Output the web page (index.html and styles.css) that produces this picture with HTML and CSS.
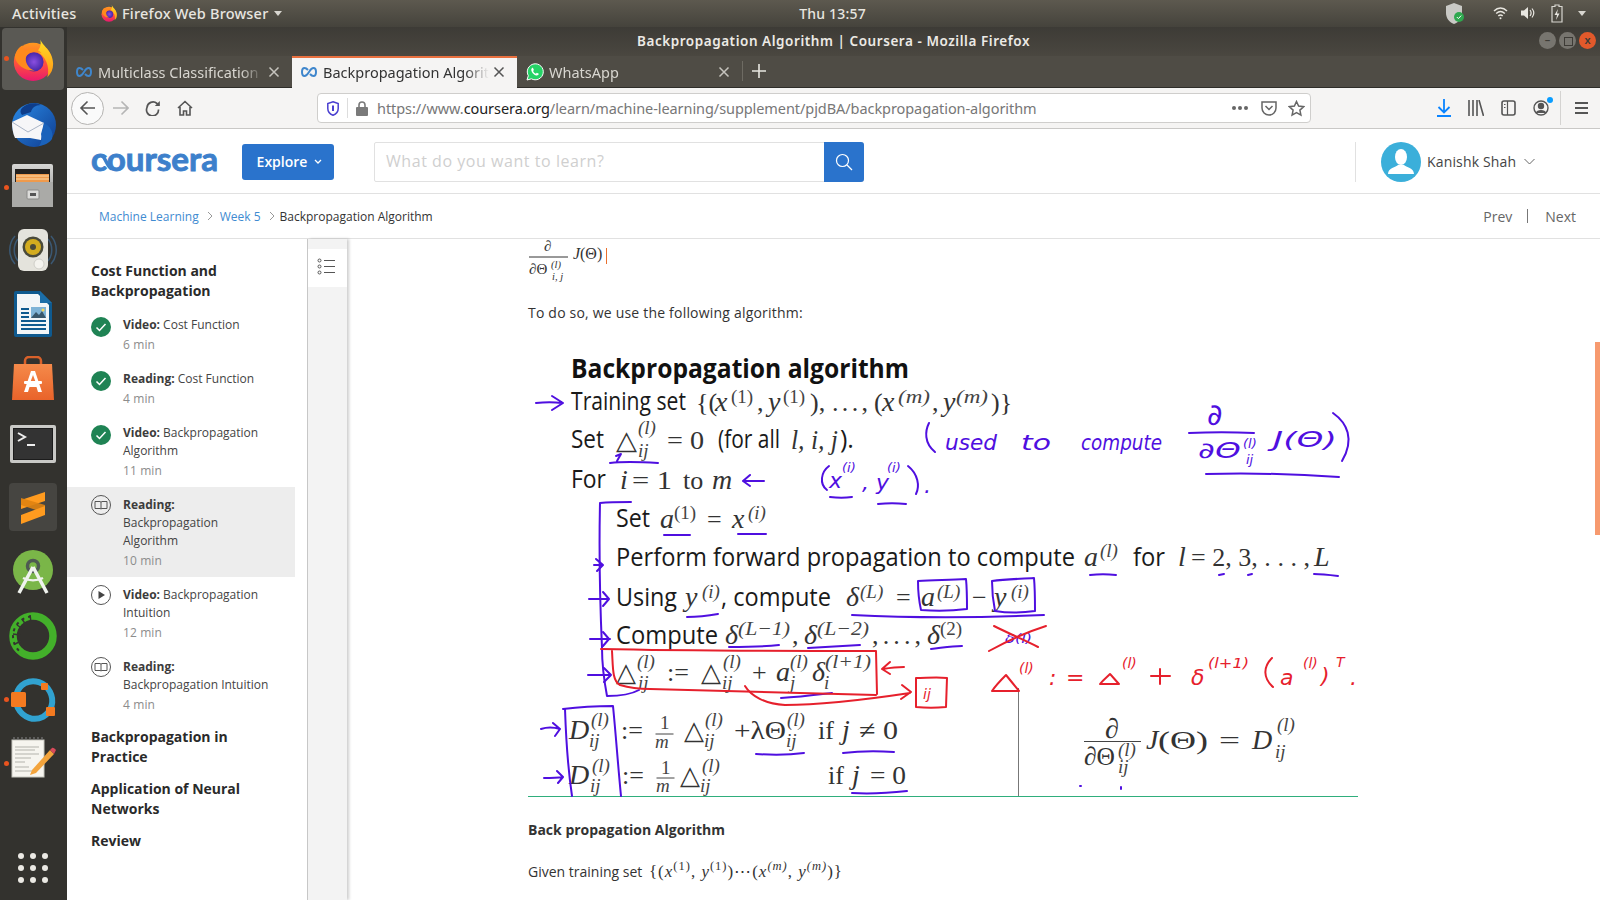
FILE: index.html
```html
<!DOCTYPE html>
<html lang="en">
<head>
  <meta charset="UTF-8" />
  <title>Backpropagation Algorithm | Coursera - Mozilla Firefox</title>
  <link rel="stylesheet" href="styles.css">
</head>
<body>

<svg class="sprite" aria-hidden="true">
  <defs>
    <linearGradient id="ffBody" x1="0" y1="0" x2="0" y2="1"><stop offset="0" stop-color="#ff9a1f"/><stop offset=".55" stop-color="#ff4f3e"/><stop offset="1" stop-color="#e8186f"/></linearGradient>
    <linearGradient id="ffFlame" x1="0" y1="0" x2="0" y2="1"><stop offset="0" stop-color="#ffe226"/><stop offset="1" stop-color="#ff9416"/></linearGradient>
    <radialGradient id="ffGlobe"><stop offset="0" stop-color="#8a4fe0"/><stop offset="1" stop-color="#4527a8"/></radialGradient>
    <linearGradient id="tbBody" x1="0" y1="0" x2="1" y2="1"><stop offset="0" stop-color="#2a8ae6"/><stop offset="1" stop-color="#0f3c8f"/></linearGradient>
    <linearGradient id="cabinet" x1="0" y1="0" x2="0" y2="1"><stop offset="0" stop-color="#d6d6d4"/><stop offset="1" stop-color="#8f8f8c"/></linearGradient>
    <linearGradient id="bag" x1="0" y1="0" x2="0" y2="1"><stop offset="0" stop-color="#f58a4a"/><stop offset="1" stop-color="#e9632a"/></linearGradient>
  </defs>
  <symbol id="i-firefox" viewBox="0 0 48 48">
    <circle cx="24" cy="27" r="20" fill="url(#ffBody)"/>
    <path d="M31 2c2 8 14 13 14 27 0 6-2 10-6 14 3-11-2-22-11-27 4-3 5-9 3-14z" fill="url(#ffFlame)"/>
    <circle cx="25" cy="27" r="10" fill="url(#ffGlobe)"/>
    <path d="M5 22c1-6 4-10 8-12 0 2 1 4 3 5 5-3 13-2 17 3-6-3-13-2-16 3-2 6 2 13 9 15-10 1-19-5-21-14z" fill="#ff8a1c"/>
  </symbol>
  <symbol id="i-tab" viewBox="0 0 16 10">
    <path d="M7 3C5.800 1.600 4.600 1 3.500 1 2 1 1 2.600 1 5s1 4 2.500 4c2.500 0 3.500-2.500 4.500-4s2-4 4.500-4C14 1 15 2.600 15 5s-1 4-2.500 4C11.400 9 10.200 8.400 9 7" fill="none" stroke="#3f86cc" stroke-width="2"/>
  </symbol>
  <symbol id="i-x" viewBox="0 0 12 12">
    <path d="M1.500 1.500l9 9m0-9l-9 9" fill="none" stroke="currentColor" stroke-width="1.500"/>
  </symbol>
  <symbol id="i-done" viewBox="0 0 20 20">
    <circle cx="10" cy="10" r="10" fill="#1f8354"/>
    <path d="M5.500 10.500l3 3 6-6.500" fill="none" stroke="#fff" stroke-width="1.500"/>
  </symbol>
  <symbol id="i-read" viewBox="0 0 20 20">
    <circle cx="10" cy="10" r="9.500" fill="none" stroke="#555"/>
    <path d="M4 6.500h5c.6 0 1 .4 1 1 0-.6.400-1 1-1h5v7h-5c-.6 0-1 .2-1 .6 0-.4-.4-.6-1-.6H4zM10 7.500v6.600" fill="none" stroke="#555"/>
  </symbol>
</svg>

<header class="topbar">
  <div class="topbar-left">
    <span class="activities">Activities</span>
    <svg class="ff-small"><use href="#i-firefox"/></svg>
    <span>Firefox Web Browser</span>
    <span class="caret"></span>
  </div>
  <div class="clock">Thu 13:57</div>
  <div class="topbar-right">
    <svg class="tray-shield" width="20" height="23" viewBox="0 0 20 23">
      <path d="M9 1l8 3v7c0 5-3 9-8 11-5-2-8-6-8-11V4z" fill="#c9c9c5"/>
      <circle cx="14" cy="15" r="5" fill="#2fa84f"/>
      <path d="M11.800 15l1.600 1.600 2.800-3" fill="none" stroke="#fff" stroke-width="1"/>
    </svg>
    <svg class="tray-wifi" width="15" height="14" viewBox="0 0 15 14" fill="none" stroke="#e8e6e0" stroke-width="1.500">
      <path d="M1 5c4-4 9-4 13 0M3.200 7.500c2.800-2.600 5.800-2.600 8.600 0M5.300 9.800c1.500-1.200 2.900-1.200 4.400 0"/>
      <circle cx="7.500" cy="12.300" r="1" fill="#e8e6e0" stroke="none"/>
    </svg>
    <svg class="tray-vol" width="15" height="14" viewBox="0 0 15 14" fill="#e8e6e0">
      <path d="M1 4.500h3L8 1v12L4 9.500H1z"/>
      <path d="M10 4c1.500 2 1.500 4 0 6M12 2.500c2.400 3 2.400 6 0 9" fill="none" stroke="#e8e6e0" stroke-width="1.200"/>
    </svg>
    <svg class="tray-bat" width="12" height="19" viewBox="0 0 12 19">
      <path d="M4 1h4v1.500h3v15.500H1V2.500h3z" fill="none" stroke="#d8d6d0" stroke-width="1.200"/>
      <path d="M7 5L3.500 11H6l-1 5 3.500-6.500H6z" fill="#e8e6e0"/>
    </svg>
    <span class="caret"></span>
  </div>
</header>

<div class="desktop">
  <nav class="dock">
    <div class="dock-item active">
      <span class="run-dot"></span>
      <svg width="46" height="46"><use href="#i-firefox"/></svg>
    </div>
    <div class="dock-item">
      <svg width="48" height="48" viewBox="0 0 48 48">
        <circle cx="25" cy="25" r="22" fill="url(#tbBody)"/>
        <path d="M13 8c5-5 13-6 19-3-6 0-9 3-10 7l-9 3c-2-2-2-5 0-7z" fill="#0e3d8a"/>
        <path d="M3 22l15-7 17 8-3 17-11-2-15 0C4 34 3 28 3 22z" fill="#f6f6f8"/>
        <path d="M3 22l16 10 16-9" fill="none" stroke="#a9b4c6" stroke-width="1"/>
        <path d="M35 23c6 3 10 9 8 16-3 4-7 6-13 7 3-4 3-8 2-12z" fill="#1a62bb"/>
      </svg>
    </div>
    <div class="dock-item">
      <span class="run-dot"></span>
      <svg class="up-2" width="42" height="44" viewBox="0 0 42 44">
        <rect x="0" y="0" width="41" height="43" rx="2" fill="url(#cabinet)"/>
        <rect x="3" y="5" width="35" height="13" fill="#23211f"/>
        <rect x="4" y="10" width="33" height="8" fill="#ef9a4c"/>
        <path d="M4 12h33M4 15h33" stroke="#fbd9a6" stroke-width="1"/>
        <path d="M0 18h41v25H0z" fill="#aaaaa7"/>
        <rect x="15" y="26" width="12" height="9" rx="1" fill="#dcdcda" stroke="#8a8a88"/>
        <rect x="18" y="29" width="6" height="3" fill="#555"/>
      </svg>
    </div>
    <div class="dock-item">
      <svg class="up-2" width="48" height="44" viewBox="0 0 48 44">
        <g fill="none" stroke="#3b5873" stroke-width="1.500">
          <path d="M6 8C-1 16-1 28 6 36M42 8c7 8 7 20 0 28"/>
          <path d="M9 11C4 17 4 27 9 33M39 11c5 6 5 16 0 22"/>
        </g>
        <rect x="9" y="1" width="30" height="42" rx="6" fill="#e4e3dc"/>
        <circle cx="24" cy="19" r="10.500" fill="#4a4a3a"/>
        <circle cx="24" cy="19" r="8" fill="#d3ac1f"/>
        <circle cx="24" cy="19" r="3" fill="#4a4a3a"/>
        <circle cx="30" cy="36" r="5" fill="#f4f3ee" stroke="#cfcec8"/>
      </svg>
    </div>
    <div class="dock-item">
      <svg class="up-2" width="40" height="48" viewBox="0 0 40 48">
        <path d="M1 3a2 2 0 012-2h24l12 12v32a2 2 0 01-2 2H3a2 2 0 01-2-2z" fill="#0f5a8f"/>
        <path d="M4 4h21l11 11v29H4z" fill="#f3f6f8"/>
        <path d="M27 1l12 12H27z" fill="#1c6ea8"/>
        <path d="M8 19h8M8 23h8M8 27h8M8 31h25M8 35h25M8 39h25" stroke="#0f5a8f" stroke-width="2"/>
        <rect x="18" y="17" width="15" height="11" fill="#7fb3d6"/>
        <path d="M18 28l5-6 3 3 3-4 4 7z" fill="#39576b"/>
        <circle cx="30" cy="20" r="1.500" fill="#f4d65a"/>
      </svg>
    </div>
    <div class="dock-item">
      <svg class="up-2" width="42" height="44" viewBox="0 0 42 44">
        <path d="M13 10V5a4 4 0 014-4h8a4 4 0 014 4v5" fill="none" stroke="#d9612a" stroke-width="2.500"/>
        <path d="M2 8h38l2 36H0z" fill="url(#bag)"/>
        <path d="M12 36l7-21h4l7 21h-4l-1.500-5h-7L16 36zM18 27h6l-3-8z" fill="#fff"/>
        <rect x="12" y="25" width="18" height="3" rx="1" fill="#fff"/>
      </svg>
    </div>
    <div class="dock-item">
      <svg width="46" height="38" viewBox="0 0 46 38">
        <rect width="46" height="38" rx="2" fill="#c9c9c6"/>
        <rect x="3" y="3" width="40" height="32" fill="#1c1c1c"/>
        <rect x="4" y="4" width="38" height="30" fill="#333"/>
        <path d="M8 8l7 4-7 4" fill="none" stroke="#eee" stroke-width="2"/>
        <path d="M17 20h8" stroke="#eee" stroke-width="2"/>
      </svg>
    </div>
    <div class="dock-item tile">
      <svg width="26" height="32" viewBox="0 0 26 32">
        <path d="M25 0v9L1 17V8z" fill="#ff9b1f"/>
        <path d="M1 13l24 8v-8L1 6z" fill="#e08311" opacity=".9"/>
        <path d="M25 14v9L1 32v-9z" fill="#ff9b1f"/>
      </svg>
    </div>
    <div class="dock-item">
      <svg width="42" height="46" viewBox="0 0 42 46">
        <circle cx="21" cy="21" r="20" fill="#7ab648"/>
        <circle cx="21" cy="17" r="5.500" fill="none" stroke="#4e5a52" stroke-width="3.500"/>
        <path d="M21 18L7 44M21 18l14 26" stroke="#f0f3ee" stroke-width="3.500"/>
        <path d="M11 29c6 3 14 3 20 0" fill="none" stroke="#f0f3ee" stroke-width="2.500"/>
      </svg>
    </div>
    <div class="dock-item">
      <svg width="48" height="48" viewBox="0 0 48 48">
        <circle cx="24" cy="24" r="20" fill="none" stroke="#43b02a" stroke-width="7.500"/>
        <path d="M22 4.500A20 20 0 004 24c0 8 4 14 9 17" fill="none" stroke="#343330" stroke-width="2" stroke-dasharray="3 4"/>
        <path d="M8 13l6 4M4 22l7 1M6 32l6-3M13 7l4 6M21 3l1 7" stroke="#343330" stroke-width="1.500"/>
      </svg>
    </div>
    <div class="dock-item">
      <span class="run-dot"></span>
      <svg width="48" height="48" viewBox="0 0 48 48">
        <ellipse cx="25" cy="24" rx="18" ry="19" transform="rotate(-28 25 24)" fill="none" stroke="#31a2d0" stroke-width="6"/>
        <rect x="2" y="16" width="15" height="15" rx="1.500" fill="#f47a20"/>
        <rect x="32" y="7" width="7" height="7" rx="1" fill="#f47a20"/>
        <rect x="37" y="31" width="9" height="9" rx="1" fill="#f47a20"/>
      </svg>
    </div>
    <div class="dock-item note">
      <span class="run-dot"></span>
      <svg width="46" height="42" viewBox="0 0 46 42">
        <rect x="2" y="3" width="32" height="37" fill="#f6f5ef" stroke="#c8c8c0"/>
        <path d="M4 3v-3M8 3v-3M12 3v-3M16 3v-3M20 3v-3M24 3v-3M28 3v-3M32 3v-3" stroke="#777" stroke-width="1.200"/>
        <path d="M5 10h24M5 13h20M5 17h24M5 21h16M5 25h10M5 30h14M5 34h20" stroke="#b3b3ac" stroke-width="1"/>
        <path d="M22 33l18-20 4 4-18 19-6 2z" fill="#f3a43c"/>
        <path d="M40 13l2-2c1-1 3 1 4 2l-2 4z" fill="#d84a5a"/>
      </svg>
    </div>
    <div class="dock-apps">
      <span></span><span></span><span></span>
      <span></span><span></span><span></span>
      <span></span><span></span><span></span>
    </div>
  </nav>

  <div class="window">
    <div class="titlebar">
      <div class="title">Backpropagation Algorithm | Coursera - Mozilla Firefox</div>
      <div class="win-btns">
        <span class="wbtn">&#8211;</span>
        <span class="wbtn square"></span>
        <span class="wbtn close">x</span>
      </div>
    </div>

    <div class="tabs">
      <div class="tab">
        <svg class="favicon"><use href="#i-tab"/></svg>
        <span class="tab-title">Multiclass Classification</span>
        <svg class="tab-x"><use href="#i-x"/></svg>
      </div>
      <div class="tab current">
        <svg class="favicon"><use href="#i-tab"/></svg>
        <span class="tab-title">Backpropagation Algorithm</span>
        <svg class="tab-x"><use href="#i-x"/></svg>
      </div>
      <div class="tab">
        <svg class="wa" width="18" height="18" viewBox="0 0 18 18">
          <path d="M1 17l1.300-4.300A8 8 0 115.400 15.800z" fill="#25d366" stroke="#fff" stroke-width="1"/>
          <path d="M6.300 4.800c-1 .8-1.400 2-.6 3.600 1 2 2.500 3.400 4.500 4 1.200.3 2.400-.4 2.600-1.600l-2-1-.9 1c-1.300-.5-2.200-1.400-2.800-2.700l.8-1-1-2.300z" fill="#fff"/>
        </svg>
        <span class="tab-title">WhatsApp</span>
        <svg class="tab-x"><use href="#i-x"/></svg>
      </div>
      <div class="new-tab">
        <svg width="14" height="14" viewBox="0 0 14 14" stroke="#e8e6e0" stroke-width="1.600"><path d="M7 0v14M0 7h14"/></svg>
      </div>
    </div>

    <div class="toolbar">
      <div class="nav-btns">
        <span class="back">
          <svg width="18" height="18" viewBox="0 0 18 18" fill="none" stroke="#555" stroke-width="1.600"><path d="M16 9H2M8.500 2.500L2 9l6.500 6.500"/></svg>
        </span>
        <svg class="fwd" width="16" height="16" viewBox="0 0 16 16" fill="none" stroke="#b5b5b5" stroke-width="1.600"><path d="M0 8h15M8.500 1.500L15 8l-6.500 6.500"/></svg>
        <svg class="reload" width="16" height="16" viewBox="0 0 16 16" fill="none" stroke="#555" stroke-width="1.700"><path d="M13.500 9.500A6 6 0 112 7.500 6 6 0 0112 3.500l2 2"/><path d="M14.800 1v5h-5" fill="#555" stroke="none"/></svg>
        <svg class="home" width="16" height="16" viewBox="0 0 16 16" fill="none" stroke="#555" stroke-width="1.600"><path d="M1 8l7-6.500L15 8M3 7v8h3.500v-4h3v4H13V7"/></svg>
      </div>
      <div class="urlbar">
        <svg width="12" height="15" viewBox="0 0 12 15"><path d="M6 .8L11.200 2.500v5c0 3-2 5.500-5.200 6.800C2.800 13 .8 10.500.8 7.500v-5z" fill="none" stroke="#4a3fd0" stroke-width="1.500"/><path d="M5 4.500h2v5.500H5z" fill="#4a3fd0"/></svg>
        <span class="url-sep"></span>
        <svg width="12" height="15" viewBox="0 0 12 15"><rect y="6" width="12" height="9" rx="1" fill="#7a7a7a"/><path d="M3 7V4a3 3 0 016 0v3" fill="none" stroke="#7a7a7a" stroke-width="1.600"/></svg>
        <span class="url"><span class="dim">https://www.</span>coursera.org<span class="dim">/learn/machine-learning/supplement/pjdBA/backpropagation-algorithm</span></span>
        <span class="url-dots"><i></i><i></i><i></i></span>
        <svg width="16" height="16" viewBox="0 0 16 16" fill="none" stroke="#666" stroke-width="1.500"><path d="M1 2h14v6a7 7 0 01-14 0z"/><path d="M4.500 6L8 9.500 11.500 6"/></svg>
        <svg width="17" height="17" viewBox="0 0 17 17" fill="none" stroke="#666" stroke-width="1.500"><path d="M8.500 1.500l2.100 4.600 5 .6-3.700 3.400 1 5-4.400-2.500-4.400 2.500 1-5L1.400 6.700l5-.6z"/></svg>
      </div>
      <div class="tool-icons">
        <svg width="14" height="18" viewBox="0 0 14 18" fill="none" stroke="#0a84ff" stroke-width="1.800"><path d="M7 0v13M1.500 8L7 13.500 12.500 8M0 17h14"/></svg>
        <svg width="16" height="16" viewBox="0 0 16 16" fill="none" stroke="#555" stroke-width="1.600"><path d="M1 0v16M5 0v16M9 0v16M11 0l4.500 16"/></svg>
        <svg width="15" height="16" viewBox="0 0 15 16" fill="none" stroke="#555" stroke-width="1.600"><rect x="1" y="1" width="13" height="14" rx="2"/><path d="M6.500 1v14M3 4.500h1.500M3 7.500h1.500" stroke-width="1.200"/></svg>
        <span class="account">
          <svg width="16" height="16" viewBox="0 0 16 16" fill="none" stroke="#555" stroke-width="1.400"><circle cx="8" cy="8" r="7"/><circle cx="8" cy="6" r="2.500" fill="#555"/><path d="M3.500 13c1-3 8-3 9 0" fill="#555"/></svg>
          <i></i>
        </span>
        <span class="tool-sep"></span>
        <svg width="13" height="12" viewBox="0 0 13 12" stroke="#555" stroke-width="1.800"><path d="M0 1h13M0 6h13M0 11h13"/></svg>
      </div>
    </div>

    <div class="site-head">
      <svg class="logo" width="131" height="44" viewBox="0 0 131 44">
        <text x="1" y="31" textLength="127" lengthAdjust="spacingAndGlyphs">coursera</text>
        <path d="M12 16c4 2 5 11 10 13" fill="none" stroke="#3d80cb" stroke-width="3.500"/>
      </svg>
      <div class="explore">Explore <svg width="8" height="6" viewBox="0 0 8 6" fill="none" stroke="#fff" stroke-width="1.300"><path d="M1 1l3 3 3-3"/></svg></div>
      <div class="search">
        <span class="search-hint">What do you want to learn?</span>
        <span class="search-btn"><svg width="18" height="18" viewBox="0 0 18 18" fill="none" stroke="#fff" stroke-width="1.200"><circle cx="7.500" cy="7.500" r="6"/><path d="M12 12l5 5"/></svg></span>
      </div>
      <div class="user">
        <svg class="avatar" width="40" height="40" viewBox="0 0 40 40">
          <circle cx="20" cy="20" r="20" fill="#3bafda"/>
          <ellipse cx="20" cy="15" rx="6" ry="8" fill="#fff"/>
          <path d="M7 32c0-6 8-7 10-9h6c2 2 10 3 10 9z" fill="#fff"/>
        </svg>
        <span class="user-name">Kanishk Shah</span>
        <svg width="11" height="7" viewBox="0 0 11 7" fill="none" stroke="#666"><path d="M.5 1l5 5 5-5"/></svg>
      </div>
    </div>

    <div class="crumbs">
      <a class="crumb">Machine Learning</a>
      <svg width="6" height="10" viewBox="0 0 6 10" fill="none" stroke="#999"><path d="M1 1l4 4-4 4"/></svg>
      <a class="crumb">Week 5</a>
      <svg width="6" height="10" viewBox="0 0 6 10" fill="none" stroke="#999"><path d="M1 1l4 4-4 4"/></svg>
      <span class="crumb-now">Backpropagation Algorithm</span>
      <div class="pager"><span>Prev</span><i></i><span>Next</span></div>
    </div>

    <div class="learn">
      <aside class="lessons">
        <h3 class="group first">Cost Function and Backpropagation</h3>
        <div class="item">
          <svg class="status ok"><use href="#i-done"/></svg>
          <div><div class="item-title"><b>Video:</b> Cost Function</div><div class="item-dur">6 min</div></div>
        </div>
        <div class="item">
          <svg class="status ok"><use href="#i-done"/></svg>
          <div><div class="item-title"><b>Reading:</b> Cost Function</div><div class="item-dur">4 min</div></div>
        </div>
        <div class="item">
          <svg class="status ok"><use href="#i-done"/></svg>
          <div><div class="item-title"><b>Video:</b> Backpropagation<br>Algorithm</div><div class="item-dur">11 min</div></div>
        </div>
        <div class="item selected">
          <svg class="status"><use href="#i-read"/></svg>
          <div><div class="item-title"><b>Reading:</b><br>Backpropagation<br>Algorithm</div><div class="item-dur">10 min</div></div>
        </div>
        <div class="item">
          <svg class="status" viewBox="0 0 20 20"><circle cx="10" cy="10" r="9.500" fill="none" stroke="#555"/><path d="M7.500 6l6.500 4-6.500 4z" fill="#444"/></svg>
          <div><div class="item-title"><b>Video:</b> Backpropagation<br>Intuition</div><div class="item-dur">12 min</div></div>
        </div>
        <div class="item">
          <svg class="status"><use href="#i-read"/></svg>
          <div><div class="item-title"><b>Reading:</b><br>Backpropagation Intuition</div><div class="item-dur">4 min</div></div>
        </div>
        <h3 class="group">Backpropagation in Practice</h3>
        <h3 class="group">Application of Neural Networks</h3>
        <h3 class="group">Review</h3>
      </aside>

      <div class="toggle-col">
        <div class="toggle">
          <svg width="18" height="17" viewBox="0 0 18 17" fill="none" stroke="#555">
            <circle cx="2.500" cy="2.500" r="1.500"/><circle cx="2.500" cy="8.500" r="1.500"/><circle cx="2.500" cy="14.500" r="1.500"/>
            <path d="M7 2.500h11M7 8.500h11M7 14.500h11"/>
          </svg>
        </div>
      </div>

      <main class="article">
        <svg class="formula" width="90" height="46" viewBox="528 239 90 46">
          <text class="f" x="544" y="251">∂</text>
          <path d="M529 257h39" stroke="#333"/>
          <text class="f" x="529" y="274">∂Θ</text>
          <text class="f-s fi" x="551" y="268">(l)</text>
          <text class="f-s fi" x="552" y="280">i, j</text>
          <text class="f fi big-f" x="573" y="259">J</text>
          <text class="f big-f" x="580" y="259">(Θ)</text>
          <path d="M606.500 248v16" stroke="#e9702e"/>
        </svg>

        <p class="para intro">To do so, we use the following algorithm:</p>

        <svg class="slide" width="860" height="462" viewBox="528 340 860 462">
          <!-- printed slide text -->
          <text class="head" x="571" y="377" textLength="338" lengthAdjust="spacingAndGlyphs">Backpropagation algorithm</text>
          <text class="sl" x="571" y="409" textLength="115" lengthAdjust="spacingAndGlyphs">Training set</text>
          <text class="m" x="696" y="410">{(</text><text class="mi" x="715" y="410">x</text><text class="ms" x="731" y="402">(1)</text><text class="m" x="757" y="410">,</text><text class="mi" x="768" y="410">y</text><text class="ms" x="783" y="402">(1)</text><text class="m" x="810" y="410">),</text><text class="m" x="832" y="410" textLength="36">. . . ,</text><text class="m" x="874" y="410">(</text><text class="mi" x="882" y="410">x</text><text class="msi" x="898" y="402" textLength="32" lengthAdjust="spacingAndGlyphs">(m)</text><text class="m" x="932" y="410">,</text><text class="mi" x="943" y="410">y</text><text class="msi" x="956" y="402" textLength="32" lengthAdjust="spacingAndGlyphs">(m)</text><text class="m" x="991" y="410">)}</text>

          <text class="sl" x="571" y="447" textLength="33" lengthAdjust="spacingAndGlyphs">Set</text>
          <text class="m" x="616" y="448" textLength="21" lengthAdjust="spacingAndGlyphs">△</text><text class="msi" x="638" y="433">(l)</text><text class="msi" x="638" y="456">ij</text><text class="m" x="667" y="448" textLength="37" lengthAdjust="spacingAndGlyphs">= 0</text>
          <text class="sl" x="718" y="447" textLength="62" lengthAdjust="spacingAndGlyphs">(for all</text>
          <text class="mi" x="791" y="448" textLength="47" lengthAdjust="spacingAndGlyphs">l, i, j</text><text class="sl" x="840" y="447">).</text>

          <text class="sl" x="571" y="487" textLength="35" lengthAdjust="spacingAndGlyphs">For</text>
          <text class="mi" x="620" y="488">i</text><text class="m" x="632" y="488" textLength="40" lengthAdjust="spacingAndGlyphs">= 1</text><text class="m" x="683" y="488">to</text><text class="mi" x="712" y="488">m</text>

          <text class="sl" x="616" y="526" textLength="34" lengthAdjust="spacingAndGlyphs">Set</text>
          <text class="mi" x="660" y="527">a</text><text class="ms" x="674" y="518">(1)</text><text class="m" x="707" y="527">=</text><text class="mi" x="732" y="527">x</text><text class="msi" x="748" y="518">(i)</text>

          <text class="sl" x="616" y="565" textLength="459" lengthAdjust="spacingAndGlyphs">Perform forward propagation to compute</text>
          <text class="mi" x="1084" y="565">a</text><text class="msi" x="1100" y="556">(l)</text>
          <text class="sl" x="1133" y="565" textLength="32" lengthAdjust="spacingAndGlyphs">for</text>
          <text class="mi" x="1178" y="565">l</text><text class="m" x="1191" y="565" textLength="119" lengthAdjust="spacing">= 2, 3, . . . ,</text><text class="mi" x="1314" y="565">L</text>

          <text class="sl" x="616" y="605" textLength="61" lengthAdjust="spacingAndGlyphs">Using</text>
          <text class="mi" x="685" y="605">y</text><text class="msi" x="702" y="597">(i)</text>
          <text class="sl" x="721" y="605" textLength="110" lengthAdjust="spacingAndGlyphs">, compute</text>
          <text class="mi" x="846" y="605">δ</text><text class="msi" x="860" y="597">(L)</text><text class="m" x="896" y="605">=</text>
          <text class="mi" x="921" y="605">a</text><text class="msi" x="937" y="597">(L)</text><text class="m" x="972" y="605">−</text>
          <text class="mi" x="994" y="605">y</text><text class="msi" x="1011" y="597">(i)</text>

          <text class="sl" x="616" y="643" textLength="102" lengthAdjust="spacingAndGlyphs">Compute</text>
          <text class="mi" x="725" y="643">δ</text><text class="msi" x="738" y="634" textLength="52" lengthAdjust="spacingAndGlyphs">(L−1)</text><text class="m" x="792" y="643">,</text>
          <text class="mi" x="804" y="643">δ</text><text class="msi" x="817" y="634" textLength="52" lengthAdjust="spacingAndGlyphs">(L−2)</text><text class="m" x="872" y="643" textLength="49">, . . . ,</text>
          <text class="mi" x="927" y="643">δ</text><text class="ms" x="940" y="634">(2)</text>

          <text class="m" x="616" y="680" textLength="20" lengthAdjust="spacingAndGlyphs">△</text><text class="msi" x="637" y="667">(l)</text><text class="msi" x="638" y="688">ij</text>
          <text class="m" x="667" y="680">:=</text>
          <text class="m" x="701" y="680" textLength="20" lengthAdjust="spacingAndGlyphs">△</text><text class="msi" x="723" y="667">(l)</text><text class="msi" x="722" y="688">ij</text>
          <text class="m" x="752" y="680">+</text><text class="mi" x="776" y="680">a</text><text class="msi" x="790" y="667">(l)</text><text class="msi" x="790" y="688">j</text>
          <text class="mi" x="812" y="680">δ</text><text class="msi" x="825" y="667" textLength="46" lengthAdjust="spacingAndGlyphs">(l+1)</text><text class="msi" x="824" y="688">i</text>

          <text class="mi" x="569" y="738">D</text><text class="msi" x="591" y="725">(l)</text><text class="msi" x="589" y="746">ij</text>
          <text class="m" x="621" y="738">:=</text>
          <text class="ms" x="660" y="728">1</text><path d="M655.500 733h18" stroke="#444"/><text class="msi" x="655" y="747">m</text>
          <text class="m" x="684" y="738" textLength="20" lengthAdjust="spacingAndGlyphs">△</text><text class="msi" x="705" y="725">(l)</text><text class="msi" x="704" y="746">ij</text>
          <text class="m" x="734" y="738" textLength="52" lengthAdjust="spacingAndGlyphs">+λΘ</text><text class="msi" x="787" y="725">(l)</text><text class="msi" x="786" y="746">ij</text>
          <text class="m" x="818" y="738">if</text><text class="mi" x="842" y="738">j</text><text class="m" x="859" y="738" textLength="39" lengthAdjust="spacingAndGlyphs">≠ 0</text>

          <text class="mi" x="569" y="783">D</text><text class="msi" x="592" y="771">(l)</text><text class="msi" x="590" y="791">ij</text>
          <text class="m" x="622" y="783">:=</text>
          <text class="ms" x="661" y="773">1</text><path d="M656.500 777h18" stroke="#444"/><text class="msi" x="656" y="791">m</text>
          <text class="m" x="680" y="783" textLength="20" lengthAdjust="spacingAndGlyphs">△</text><text class="msi" x="702" y="771">(l)</text><text class="msi" x="700" y="791">ij</text>
          <text class="m" x="828" y="783">if</text><text class="mi" x="852" y="783">j</text><text class="m" x="870" y="783" textLength="36" lengthAdjust="spacingAndGlyphs">= 0</text>

          <text class="mi" x="1105" y="737">∂</text><path d="M1084 740.500h57" stroke="#444"/>
          <text class="m" x="1084" y="764" textLength="31" lengthAdjust="spacingAndGlyphs">∂Θ</text><text class="msi" x="1118" y="755">(l)</text><text class="msi" x="1118" y="772">ij</text>
          <text class="mi" x="1146" y="748">J</text><text class="m" x="1158" y="748" textLength="50" lengthAdjust="spacingAndGlyphs">(Θ)</text><text class="m" x="1219" y="748" textLength="21" lengthAdjust="spacingAndGlyphs">=</text>
          <text class="mi" x="1252" y="748">D</text><text class="msi" x="1277" y="730">(l)</text><text class="msi" x="1275" y="757">ij</text>

          <path d="M1018.500 687v108" stroke="#777"/>
          <path d="M528 795.500h830" stroke="#2fae7c"/>

          <!-- purple pen notes -->
          <g class="pen-p">
            <path d="M536 402c9-1 18-1 26 0M552 395l11 7-11 7"/>
            <path d="M610 462c16-2 32-1 48 0M617 460l4-7-5 2"/>
            <path d="M764 480h-20M750 474l-7 6 7 5"/>
            <path d="M929 422c-4 8-5 20 6 29"/>
            <path d="M1189 432c22-1 43-1 65 0"/>
            <path d="M1206 473c40-1 90 0 133 3"/>
            <path d="M1333 412c14 10 22 26 9 48" />
            <path d="M829 465c-8 6-10 18-2 24M908 465c10 8 12 20 8 28M830 496c8 1 15 1 22 0M878 503c9-1 19-1 28 0"/>
            <path d="M631 501c-10 0-21 0-31 1-1 45 0 100 2 145 0 18 2 32 5 48 11 0 23-1 32-6"/>
            <path d="M664 534h26M738 533h28M1090 574c9-1 17-1 26 0M1219 574l5-1M1248 574l4-1M1314 573c8 0 16 1 24 2"/>
            <path d="M589 598h20M603 591l6 7-6 7M590 638h20M603 631l6 7-6 7M588 674h23M604 667l7 7-7 7M596 558l7 6-6 6M594 564h8"/>
            <path d="M687 616c10 0 20-1 31-3M852 614c60 3 125 3 192 0"/>
            <path d="M918 580c16-1 32-1 48-2 1 10 1 20 1 30-16 2-32 2-46 1-2-9-3-19-3-29zM992 580c14-2 28-2 42-3 1 11 1 22 1 33-14 2-28 2-40 0-2-10-3-20-3-30z"/>
            <path d="M729 646c17 0 33 0 50-2M808 647c17-1 35-2 52-3M931 648c10-1 20-3 31-3"/>
            <path d="M781 697c18-1 34-3 51-5"/>
            <path d="M563 708c16-2 34-3 50-3 3 30 5 60 8 90M565 708c1 30 3 60 7 87"/>
            <path d="M541 728c6-2 12-2 19 0M553 722l7 6-5 7M544 777c6 0 12 0 19-1M557 770l6 6-5 6"/>
            <path d="M756 753c16 1 33 1 48-1M843 752c17-2 34-2 51-1M852 792c18 1 37 0 55-2"/>
            <path d="M1080 785h1M1121 786v2"/>
          </g>
          <text class="hw" x="945" y="449" textLength="52" lengthAdjust="spacingAndGlyphs">used</text>
          <text class="hw" x="1021" y="449" textLength="30" lengthAdjust="spacingAndGlyphs">to</text>
          <text class="hw" x="1081" y="449" textLength="81" lengthAdjust="spacingAndGlyphs">compute</text>
          <text class="hw tall" x="1207" y="424">∂</text>
          <text class="hw" x="1198" y="457" textLength="43" lengthAdjust="spacingAndGlyphs">∂Θ</text>
          <text class="hw-s" x="1243" y="447">(l)</text><text class="hw-s" x="1246" y="463">ij</text>
          <text class="hw" x="1273" y="446" textLength="64" lengthAdjust="spacingAndGlyphs">J(Θ)</text>
          <text class="hw" x="829" y="487">x</text><text class="hw-s" x="842" y="471">(i)</text><text class="hw" x="862" y="489">,</text>
          <text class="hw" x="876" y="489">y</text><text class="hw-s" x="887" y="471">(i)</text><text class="hw" x="924" y="492">.</text>
          <text class="hw-s" x="1005" y="642" textLength="27" lengthAdjust="spacingAndGlyphs">δ(l)</text>

          <!-- red pen notes -->
          <g class="pen-r">
            <path d="M601 648c90 2 185 2 275 2l1 43M612 650c1 15 0 30 8 34 10 3 20 4 30 4 75 2 150 4 226 6"/>
            <path d="M745 685c6 10 20 18 40 19 40 0 85-6 125-12M902 684l9 7-10 7"/>
            <path d="M916 677c10 0 21-1 31 0l-1 29c-10 1-20 1-30 0z"/>
            <path d="M904 666c-7 0-15 1-21 2M890 661l-8 7 8 5"/>
            <path d="M994 625c14 7 30 14 44 21M989 650c18-10 38-19 57-25"/>
            <path d="M1006 674c-5 5-10 10-14 16h27c-4-5-9-11-13-16z"/>
            <path d="M1110 673c-3 3-7 6-10 10h19c-3-3-6-7-9-10zM1151 675c6 0 13 0 19 0M1160 668v15"/>
            <path d="M1272 657c-9 9-9 20 1 29"/>
          </g>
          <text class="hw-r" x="1019" y="672">(l)</text>
          <text class="hw-r big" x="1049" y="684">:</text><text class="hw-r big" x="1066" y="684">=</text>
          <text class="hw-r" x="1122" y="667">(l)</text>
          <text class="hw-r big" x="1191" y="684">δ</text>
          <text class="hw-r" x="1208" y="667" textLength="41" lengthAdjust="spacingAndGlyphs">(l+1)</text>
          <text class="hw-r big" x="1280" y="684">a</text>
          <text class="hw-r" x="1303" y="667">(l)</text>
          <text class="hw-r big" x="1321" y="682">)</text>
          <text class="hw-r" x="1336" y="666">T</text>
          <text class="hw-r big" x="1350" y="684">.</text>
          <text class="hw-r" x="923" y="698">ij</text>
        </svg>

        <p class="para strong">Back propagation Algorithm</p>
        <p class="para given">Given training set <span class="math">{(<i>x</i><sup>(1)</sup>, <i>y</i><sup>(1)</sup>)⋯(<i>x</i><sup><i>(m)</i></sup>, <i>y</i><sup><i>(m)</i></sup>)}</span></p>
      </main>
    </div>
  </div>
</div>

<div class="scroll-thumb"></div>

</body>
</html>
```
FILE: styles.css
```css
* { box-sizing: border-box; }
html, body {
  margin: 0;
  padding: 0;
  height: 900px;
  overflow: hidden;
  background: #fff;
  font-family: "Open Sans", "Noto Sans", sans-serif;
  color: #333;
}
.sprite { display: block; width: 0; height: 0; }

/* gnome panel */
.topbar {
  height: 27px;
  display: grid;
  grid-template-columns: 1fr auto 1fr;
  align-items: center;
  padding: 0 14px 1px 12px;
  background: linear-gradient(#5d594f, #45433c);
  color: #e8e6e0;
  font-family: "Noto Sans", sans-serif;
  font-size: 14.500px;
  font-weight: 500;
  letter-spacing: .2px;
}
.topbar-left { display: flex; align-items: center; }
.activities { width: 88px; }
.ff-small { width: 18px; height: 18px; margin-right: 4px; }
.caret {
  width: 0;
  height: 0;
  margin-left: 6px;
  border-left: 4.500px solid transparent;
  border-right: 4.500px solid transparent;
  border-top: 5px solid #d8d6d0;
}
.clock { padding-left: 67px; font-size: 14px; }
.topbar-right { display: flex; align-items: center; justify-content: flex-end; }
.tray-shield { margin-right: 28px; }
.tray-wifi { margin-right: 12px; }
.tray-vol { margin-right: 16px; }
.tray-bat { margin-right: 9px; }

/* launcher */
.desktop { display: flex; height: 873px; }
.dock {
  width: 67px;
  flex: none;
  display: flex;
  flex-direction: column;
  background: #33322e;
  padding: 1px 0 0;
}
.dock-item {
  position: relative;
  height: 64px;
  flex: none;
  display: flex;
  align-items: center;
  justify-content: center;
  margin: 0 3px 0 2px;
}
.dock-item.active { height: 62px; margin-bottom: 2px; background: #5a5954; border-radius: 4px; }
.dock-item.tile::before {
  content: "";
  position: absolute;
  left: 7px;
  top: 7px;
  width: 48px;
  height: 48px;
  border-radius: 4px;
  background: #464541;
}
.dock-item.tile svg { position: relative; }
.dock-item.note svg { margin-bottom: 12px; }
.up-2 { margin-bottom: 4px; }
.run-dot {
  position: absolute;
  left: 2px;
  top: 50%;
  width: 5px;
  height: 5px;
  margin-top: -3px;
  border-radius: 50%;
  background: #e9541f;
}
.dock-apps {
  margin: auto 0 17px 18px;
  display: grid;
  grid-template-columns: repeat(3, 6px);
  gap: 6px;
}
.dock-apps span { width: 6px; height: 6px; border-radius: 50%; background: #ebe9e4; }

/* firefox chrome */
.window { flex: 1; min-width: 0; display: flex; flex-direction: column; }
.titlebar {
  height: 29px;
  display: flex;
  align-items: center;
  justify-content: center;
  padding-bottom: 2px;
  background: linear-gradient(#3d3b36, #4a4740);
  color: #eceae5;
  font-family: "Noto Sans", sans-serif;
  font-size: 13.500px;
  font-weight: 600;
}
.title { letter-spacing: .55px; }
.win-btns {
  position: absolute;
  right: 4px;
  top: 32px;
  display: flex;
  gap: 3px;
}
.wbtn {
  width: 17px;
  height: 17px;
  border-radius: 50%;
  background: #77756f;
  color: #3d3b36;
  font-size: 11px;
  line-height: 16px;
  text-align: center;
}
.wbtn.square { position: relative; }
.wbtn.square::after {
  content: "";
  position: absolute;
  left: 5px;
  top: 5px;
  width: 7px;
  height: 7px;
  border: 1px solid #3d3b36;
}
.wbtn.close { background: #e2592b; }

.tabs {
  height: 32px;
  display: flex;
  background: #4f4c45;
  border-bottom: 1px solid #2e2d29;
}
.tab {
  width: 225px;
  height: 32px;
  flex: none;
  display: flex;
  align-items: center;
  padding: 0 12px 1px 9px;
  color: #d8d6d0;
  font-family: "Noto Sans", sans-serif;
  font-size: 14.500px;
}
.tab.current {
  background: #f5f4f3;
  color: #333;
  box-shadow: inset 0 2px 0 #e9703f;
}
.favicon { width: 16px; height: 10px; margin-right: 6px; flex: none; }
.wa { margin-right: 5px; flex: none; }
.tab-title {
  flex: 1;
  white-space: nowrap;
  overflow: hidden;
  -webkit-mask-image: linear-gradient(to right, #000 86%, transparent);
  mask-image: linear-gradient(to right, #000 86%, transparent);
}
.tab-x { width: 12px; height: 12px; margin-left: 4px; flex: none; color: #c6c4be; }
.tab.current .tab-x { color: #555; }
.new-tab {
  display: flex;
  align-items: center;
  height: 20px;
  margin-top: 5px;
  border-left: 1px solid #6e6b63;
  padding-left: 9px;
}

.toolbar {
  height: 41px;
  display: flex;
  align-items: center;
  background: #f5f4f3;
  border-bottom: 1px solid #c9c8c6;
}
.nav-btns { width: 250px; flex: none; display: flex; align-items: center; padding-left: 4px; }
.back {
  width: 33px;
  height: 33px;
  border-radius: 50%;
  border: 1px solid #b5b4b2;
  background: #fafafa;
  display: flex;
  align-items: center;
  justify-content: center;
}
.fwd { margin-left: 9px; }
.reload { margin-left: 16px; }
.home { margin-left: 16px; }
.urlbar {
  width: 994px;
  height: 30px;
  flex: none;
  display: flex;
  align-items: center;
  padding: 0 5px 0 9px;
  gap: 8px;
  background: #fff;
  border: 1px solid #cfcecc;
  border-radius: 4px;
  font-family: "Noto Sans", sans-serif;
}
.url-sep { width: 1px; height: 20px; background: #ddd; }
.url { flex: 1; color: #222; font-size: 14.500px; margin-left: 1px; white-space: nowrap; letter-spacing: -.07px; }
.dim { color: #777; }
.url-dots { display: flex; gap: 2px; margin-right: 5px; }
.url-dots i { width: 4px; height: 4px; border-radius: 50%; background: #666; }
.urlbar > svg:last-child { margin-left: 3px; }
.tool-icons { flex: 1; display: flex; align-items: center; padding-left: 126px; gap: 17px; }
.account { position: relative; display: flex; }
.account i {
  position: absolute;
  right: -4px;
  top: -3px;
  width: 6px;
  height: 6px;
  border-radius: 50%;
  background: #0a9dff;
}
.tool-sep { width: 1px; height: 34px; background: #d4d3d1; margin: 0 -3px 0 -6px; }

/* coursera header */
.site-head {
  height: 65px;
  display: flex;
  align-items: center;
  padding: 1px 0 0 23px;
  border-bottom: 1px solid #e1e1e1;
  background: #fff;
}
.logo { flex: none; margin-right: -2px; }
.logo text { font-family: "Lato", sans-serif; font-size: 33px; font-weight: 700; fill: #3d80cb; stroke: #3d80cb; stroke-width: .9px; }
.explore {
  width: 92px;
  height: 36px;
  margin-left: 23px;
  padding-left: 3px;
  display: flex;
  align-items: center;
  justify-content: center;
  gap: 7px;
  background: #2a73cc;
  border-radius: 3px;
  color: #fff;
  font-size: 14px;
  font-weight: 600;
}
.search {
  width: 490px;
  height: 40px;
  margin-left: 40px;
  display: flex;
  align-items: center;
  justify-content: space-between;
  border: 1px solid #e1e1e1;
  border-radius: 2px;
}
.search-hint { padding: 0 0 1px 11px; color: #cfcfcf; font-size: 16px; letter-spacing: .55px; }
.search-btn {
  width: 40px;
  height: 40px;
  margin: -1px;
  background: #2a73cc;
  border-radius: 0 3px 3px 0;
  display: flex;
  align-items: center;
  justify-content: center;
}
.user {
  margin-left: 491px;
  height: 40px;
  display: flex;
  align-items: center;
  padding-left: 25px;
  border-left: 1px solid #e1e1e1;
  font-size: 14px;
  color: #444;
}
.user-name { margin: 0 8px 0 6px; letter-spacing: .15px; }

.crumbs {
  height: 45px;
  display: flex;
  align-items: center;
  padding: 0 24px 0 32px;
  gap: 7px;
  border-bottom: 1px solid #e1e1e1;
  font-size: 12px;
}
.crumb { color: #3f8bd1; }
.crumb-now { color: #333; margin-left: -2px; }
.crumbs svg { margin-left: 1px; }
.pager { margin-left: auto; display: flex; align-items: center; gap: 15px; font-size: 14px; color: #666; }
.pager i { width: 1px; height: 14px; margin-right: 2px; background: #777; }

/* lesson page */
.learn { flex: 1; display: flex; min-height: 0; }
.lessons {
  width: 241px;
  flex: none;
  padding: 22px 12px 0 0;
  background: #fff;
  border-right: 1px solid #c9c9c9;
}
.group {
  margin: 12px 0 0;
  padding: 0 30px 0 24px;
  font-size: 14px;
  font-weight: 700;
  line-height: 20px;
  color: #2a2a2a;
}
.group.first { margin: 0 0 6px; }
.item + .group { margin-top: 6px; }
.item { display: flex; gap: 12px; padding: 9px 0 5px 24px; }
.item.selected { background: #ededed; }
.status { width: 20px; height: 20px; flex: none; margin-top: -1px; }
.status.ok { margin-top: 1px; }
.item-title { font-size: 12px; line-height: 18px; color: #444; }
.item-title b { font-weight: 700; color: #3c3c3c; }
.item-dur { font-size: 12px; line-height: 22px; color: #8c8c8c; letter-spacing: .1px; }

.toggle-col {
  width: 39px;
  flex: none;
  padding-top: 10px;
  background: #f3f3f3;
  box-shadow: 2px 0 3px rgba(0,0,0,.2);
}
.toggle {
  height: 38px;
  padding: 0 4px 4px 0;
  background: #fff;
  display: flex;
  align-items: center;
  justify-content: center;
}

.article { flex: 1; min-width: 0; padding-left: 181px; }
.formula, .slide { display: block; }
.para { margin: 0; font-size: 14px; line-height: 20px; color: #333; }
.intro { margin: 18px 0 18px; letter-spacing: .2px; }
.strong { margin-top: 17px; font-weight: 700; }
.given { margin-top: 22px; }
.math { margin-left: 3px; font-family: "Liberation Serif", serif; font-size: 17px; letter-spacing: 1px; }
.math sup { font-size: 12.500px; line-height: 0; }

.f { font: 15px "Liberation Serif", serif; fill: #333; }
.f.big-f { font-size: 16px; }
.f-s { font: 10.500px "Liberation Serif", serif; fill: #333; }
.fi { font-style: italic; }

/* text of the slide picture */
.head { font: 700 27px "Open Sans", sans-serif; fill: #111; }
.sl { font: 400 25px "Open Sans", sans-serif; fill: #1a1a1a; }
.m { font: 26px "Liberation Serif", "DejaVu Sans", serif; fill: #333; }
.mi { font: italic 28px "Liberation Serif", serif; fill: #333; }
.ms { font: 19px "Liberation Serif", serif; fill: #444; }
.msi { font: italic 19px "Liberation Serif", serif; fill: #444; }
.hw { font: italic 22px "DejaVu Sans", sans-serif; fill: #4f0fe0; }
.hw.tall { font-size: 30px; }
.hw-s { font: italic 13px "DejaVu Sans", sans-serif; fill: #4f0fe0; }
.hw-r { font: italic 14px "DejaVu Sans", sans-serif; fill: #e6202c; }
.hw-r.big { font-size: 22px; }
.pen-p, .pen-r { fill: none; stroke-width: 2; stroke-linecap: round; stroke-linejoin: round; }
.pen-p { stroke: #4f0fe0; }
.pen-r { stroke: #e6202c; }

.scroll-thumb {
  position: absolute;
  right: 0;
  top: 342px;
  width: 5px;
  height: 193px;
  background: #f79a6f;
}
```
